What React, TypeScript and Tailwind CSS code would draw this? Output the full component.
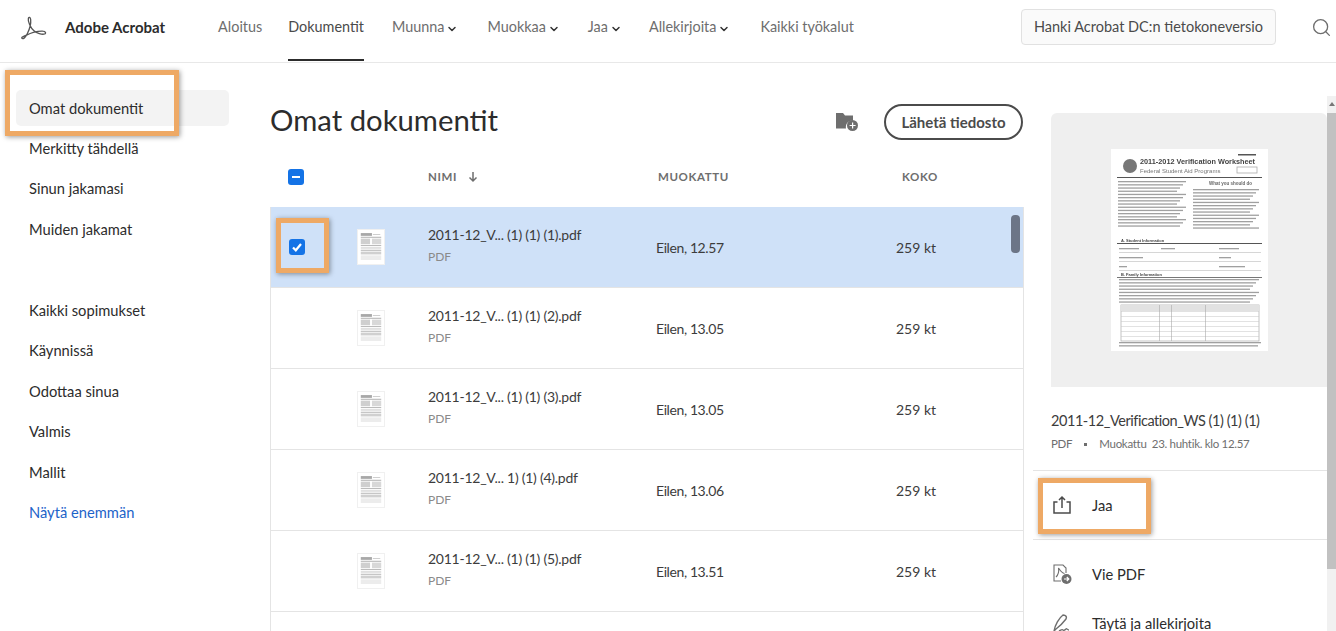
import { ChevronDown, Search } from 'lucide-react';

const font = { fontFamily: 'Lato, "Open Sans", sans-serif' };

const rows = [
  { name: '2011-12_V... (1) (1) (1).pdf', modified: 'Eilen, 12.57', selected: true },
  { name: '2011-12_V... (1) (1) (2).pdf', modified: 'Eilen, 13.05' },
  { name: '2011-12_V... (1) (1) (3).pdf', modified: 'Eilen, 13.05' },
  { name: '2011-12_V... 1) (1) (4).pdf', modified: 'Eilen, 13.06' },
  { name: '2011-12_V... (1) (1) (5).pdf', modified: 'Eilen, 13.51' }
];

const navItems = [
  { label: 'Aloitus', cls: 'ml-[53px]' },
  { label: 'Dokumentit', cls: 'ml-[26px]', active: true },
  { label: 'Muunna', cls: 'ml-[28px]', menu: true },
  { label: 'Muokkaa', cls: 'ml-[29px]', menu: true },
  { label: 'Jaa', cls: 'ml-[28px]', menu: true },
  { label: 'Allekirjoita', cls: 'ml-[27px]', menu: true },
  { label: 'Kaikki työkalut', cls: 'ml-[30px]' }
];

function AcrobatLogo() {
  return (
    <svg viewBox="0 0 30 30" className="h-[28px] w-[28px]" fill="none" stroke="#555" strokeWidth="1.4">
      <path d="M3 27c1 1.500 3.500 0 6-5 2.500-5 4-10 3.500-15-.2-2.500-2-3-2.500-1-.7 3 2.500 10 6 13 3 2.500 8.500 4.500 11.500 3.500 1.800-.7 1-3-2-3-4.500-.2-13 2-18 4.500-2.500 1.200-5 1.500-4.500 3z" />
    </svg>
  );
}

function DocThumb({ detailed }: { detailed?: boolean }) {
  if (!detailed) {
    return (
      <svg viewBox="0 0 28 36" className="h-[36px] w-[28px] border border-[#f0f0f0] bg-white">
        <g className="blur-[0.5px]">
          <rect x="3" y="3" width="12" height="3" fill="#a8a8a8" />
          <rect x="16" y="4" width="8" height="1" fill="#ccc" />
          <rect x="3" y="7" width="22" height="1" fill="#aaa" />
          <rect x="3" y="9" width="10" height="6" fill="#cfcfcf" />
          <rect x="15" y="9" width="10" height="6" fill="#d8d8d8" />
          <rect x="3" y="16" width="22" height="1" fill="#b0b0b0" />
          <rect x="3" y="18" width="22" height="2" fill="#e0e0e0" />
          <rect x="3" y="21" width="22" height="1" fill="#b0b0b0" />
          <rect x="3" y="23" width="22" height="3" fill="#d0d0d0" />
          <rect x="3" y="27" width="22" height="5" fill="#ececec" />
        </g>
      </svg>
    );
  }
  const para = (x: number, y: number, w: number, n: number) =>
    Array.from({ length: n }, (_, i) => (
      <rect key={`${x}-${y}-${i}`} x={x} y={y + i * 3.2} width={w - (i % 4) * 3} height="1.3" fill="#a0a0a0" />
    ));
  return (
    <svg viewBox="0 0 157 202" className="h-[202px] w-[157px] bg-white">
      <g className="blur-[0.4px]">
        <circle cx="19" cy="17" r="7" fill="#777" />
        <text x="29" y="15" fontSize="7.300" fontWeight="700" fill="#444" fontFamily="Liberation Sans, sans-serif">
          2011-2012 Verification Worksheet
        </text>
        <text x="29" y="24" fontSize="6" fill="#777" fontFamily="Liberation Sans, sans-serif">
          Federal Student Aid Programs
        </text>
        <rect x="127" y="5" width="18" height="1.500" fill="#555" />
        <rect x="126" y="18" width="20" height="6" fill="none" stroke="#aaa" strokeWidth="0.8" />
        <rect x="6" y="28" width="145" height="1" fill="#555" />
        {para(7, 32, 68, 12)}
        {para(7, 70, 68, 3)}
        <text x="98" y="36" fontSize="4.500" fontWeight="700" fill="#666" fontFamily="Liberation Sans, sans-serif">
          What you should do
        </text>
        {para(82, 40, 66, 13)}
        <text x="10" y="93" fontSize="4" fontWeight="700" fill="#444" fontFamily="Liberation Sans, sans-serif">
          A. Student Information
        </text>
        <rect x="6" y="94" width="145" height="1" fill="#555" />
        {[103, 112, 121].map((y) => (
          <rect key={y} x="8" y={y} width="142" height="0.600" fill="#bbb" />
        ))}
        {para(8, 99, 20, 1)}
        {para(50, 99, 14, 1)}
        {para(108, 99, 20, 1)}
        {para(8, 108, 24, 1)}
        {para(108, 108, 12, 1)}
        {para(8, 117, 8, 1)}
        {para(108, 117, 26, 1)}
        <text x="10" y="127" fontSize="4" fontWeight="700" fill="#444" fontFamily="Liberation Sans, sans-serif">
          B. Family Information
        </text>
        <rect x="6" y="128" width="145" height="0.800" fill="#555" />
        {para(8, 130, 140, 8)}
        <rect x="10" y="156" width="138" height="36" fill="none" stroke="#aaa" strokeWidth="0.7" />
        <rect x="10" y="156" width="138" height="6" fill="#e2e2e2" />
        {[162, 167, 172, 177, 182, 187].map((y) => (
          <rect key={y} x="10" y={y} width="138" height="0.500" fill="#c4c4c4" />
        ))}
        {[48, 60, 94].map((x) => (
          <rect key={x} x={x} y="156" width="0.600" height="36" fill="#aaa" />
        ))}
        {para(8, 193, 142, 2)}
      </g>
    </svg>
  );
}

function Checkbox({ kind }: { kind: 'check' | 'minus' }) {
  return (
    <span className="flex h-[16px] w-[16px] items-center justify-center rounded-[3px] bg-[#1473e6]">
      {kind === 'check' ? (
        <svg viewBox="0 0 12 12" className="h-[12px] w-[12px]" fill="none" stroke="#fff" strokeWidth="2.200">
          <path d="M2 6.500l2.800 2.800L10 3" />
        </svg>
      ) : (
        <span className="h-[2px] w-[8px] bg-white" />
      )}
    </span>
  );
}

function Highlight({ className }: { className: string }) {
  return (
    <div
      className={`pointer-events-none absolute border-[5px] border-[#eea965] shadow-[1px_1px_5px_rgba(0,0,0,0.4)] ${className}`}
    />
  );
}

function SideLink({ label, className = 'text-[#2c2c2c]' }: { label: string; className?: string }) {
  return <div className={`flex h-[36px] items-center pl-[13px] text-[14.700px] ${className}`}>{label}</div>;
}

function Action({ label, icon, className }: { label: string; icon: React.ReactNode; className: string }) {
  return (
    <div className={`flex items-center pl-[19px] text-[14.700px] text-[#2c2c2c] ${className}`}>
      <span className="flex w-[40px] items-center">{icon}</span>
      {label}
    </div>
  );
}

export default function App() {
  return (
    <div className="relative h-[631px] w-[1336px] overflow-hidden bg-white" style={font}>
      <header className="flex h-[63px] items-center border-b border-[#e8e8e8] pb-[8px] pl-[19px] text-[14.400px] text-[#6e6e6e]">
        <AcrobatLogo />
        <span className="ml-[18px] text-[15px] font-bold text-[#2c2c2c]">Adobe Acrobat</span>
        {navItems.map((item) => (
          <div
            key={item.label}
            className={`relative flex h-[54px] items-center ${item.cls} ${item.active ? 'text-[#4b4b4b]' : ''}`}
          >
            {item.label}
            {item.menu && <ChevronDown size={12} strokeWidth={3} className="ml-[2px] mt-[3px] text-[#333]" />}
            {item.active && <span className="absolute inset-x-0 bottom-[-7px] h-[2px] bg-[#2c2c2c]" />}
          </div>
        ))}
        <div className="ml-[auto] flex h-[36px] w-[255px] items-center justify-center rounded-[4px] border border-[#e1e1e1] bg-[#fafafa] text-[14.500px] text-[#4b4b4b]">
          Hanki Acrobat DC:n tietokoneversio
        </div>
        <Search size={21} strokeWidth={1.500} className="ml-[35px] mr-[4px] text-[#6e6e6e]" />
      </header>

      <div className="flex">
        <aside className="w-[270px] shrink-0 pl-[16px] pt-[27px]">
          <SideLink label="Omat dokumentit" className="w-[213px] rounded-[5px] bg-[#f3f3f3] text-[#2c2c2c]" />
          <div className="mt-[4px] flex flex-col gap-[4.500px]">
            <SideLink label="Merkitty tähdellä" />
            <SideLink label="Sinun jakamasi" />
            <SideLink label="Muiden jakamat" />
          </div>
          <div className="mt-[45px] flex flex-col gap-[4.500px]">
            <SideLink label="Kaikki sopimukset" />
            <SideLink label="Käynnissä" />
            <SideLink label="Odottaa sinua" />
            <SideLink label="Valmis" />
            <SideLink label="Mallit" />
            <SideLink label="Näytä enemmän" className="text-[#1d63c9]" />
          </div>
        </aside>

        <main className="w-[754px] shrink-0">
          <div className="flex h-[99px] items-start pt-[41px]">
            <h1 className="-mt-[2px] text-[29.300px] leading-[36px] text-[#2c2c2c]">Omat dokumentit</h1>
            <svg viewBox="0 0 24 22" className="ml-[auto] mt-[6px] h-[22px] w-[24px]" fill="#6e6e6e">
              <path d="M1 3h7l2 2.500h8v5a6.500 6.500 0 0 0-7 8H1z" />
              <circle cx="17.500" cy="15.500" r="5.500" />
              <path d="M17 12.500h1.200v2.400h2.400v1.200h-2.400v2.400H17v-2.400h-2.400v-1.200H17z" fill="#fff" />
            </svg>
            <div className="ml-[25px] mr-[1px] flex h-[36px] w-[139px] items-center justify-center rounded-full border-2 border-[#4b4b4b] text-[15px] font-bold text-[#4b4b4b]">
              Lähetä tiedosto
            </div>
          </div>

          <div className="flex h-[30px] items-center text-[11.500px] font-bold tracking-[0.6px] text-[#6e6e6e]">
            <span className="ml-[18px]">
              <Checkbox kind="minus" />
            </span>
            <span className="ml-[124px] flex w-[230px] items-center">
              NIMI
              <svg viewBox="0 0 12 12" className="ml-[10px] h-[12px] w-[12px]" fill="none" stroke="#6e6e6e" strokeWidth="1.500">
                <path d="M6 1v9M2.500 6.500L6 10l3.500-3.500" />
              </svg>
            </span>
            <span className="w-[244px]">MUOKATTU</span>
            <span>KOKO</span>
          </div>

          <div className="relative mt-[15px] h-[424px] w-[754px] overflow-hidden border-x border-[#e4e4e4]">
            {rows.map((row) => (
              <div
                key={row.name}
                className={`flex h-[81px] items-center border-b border-[#e4e4e4] ${row.selected ? 'bg-[#cfe1f8]' : 'bg-white'}`}
              >
                <span className="ml-[18px] w-[68px]">{row.selected && <Checkbox kind="check" />}</span>
                <DocThumb />
                <div className="ml-[43px] w-[228px] pb-[4px]">
                  <div className="text-[14px] leading-[20px] tracking-[-0.25px] text-[#3c3c3c]">{row.name}</div>
                  <div className="mt-[4px] text-[12px] leading-[16px] text-[#8a8a8a]">PDF</div>
                </div>
                <span className="w-[240px] text-[14px] tracking-[-0.4px] text-[#3c3c3c]">{row.modified}</span>
                <span className="text-[14px] text-[#3c3c3c]">259 kt</span>
              </div>
            ))}
            <div className="absolute right-[3px] top-[8px] h-[38px] w-[9px] rounded-[4px] bg-[#6c7587]" />
          </div>
        </main>

        <section className="ml-[9px] w-[294px] shrink-0 pt-[50px]">
          <div className="ml-[18px] flex h-[274px] w-[276px] items-center justify-center rounded-t-[6px] bg-[#efefef]">
            <DocThumb detailed />
          </div>
          <div className="ml-[18px] mt-[24px] text-[14.500px] leading-[20px] tracking-[-0.45px] text-[#3c3c3c]">
            2011-12_Verification_WS (1) (1) (1)
          </div>
          <div className="ml-[18px] mt-[2px] flex items-center text-[11.500px] leading-[22px] tracking-[-0.3px] text-[#6e6e6e]">
            PDF
            <span className="ml-[12px] mr-[12px] h-[3px] w-[3px] bg-[#6e6e6e]" />
            Muokattu&nbsp;&nbsp;23. huhtik. klo 12.57
          </div>
          <div className="mt-[15px] h-px bg-[#e4e4e4]" />
          <Action
            label="Jaa"
            className="h-[68px]"
            icon={
              <svg viewBox="0 0 20 20" className="h-[20px] w-[20px]" fill="none" stroke="#4b4b4b" strokeWidth="1.500">
                <path d="M5.500 7H2v11h16V7h-3.500M10 13V2M7 5l3-3 3 3" />
              </svg>
            }
          />
          <div className="h-px bg-[#e4e4e4]" />
          <Action
            label="Vie PDF"
            className="mt-[16px] h-[36px]"
            icon={
              <svg viewBox="0 0 20 22" className="h-[22px] w-[20px]" fill="none" stroke="#6e6e6e" strokeWidth="1.100">
                <path d="M9 18H2V2h9l3 3v5M4 14c2-2 3-6 2.500-9 2 3 3.500 5 6 5.500" />
                <circle cx="14.500" cy="16" r="5" fill="#6e6e6e" stroke="none" />
                <path d="M12 16h4.500M14.800 14l2 2-2 2" stroke="#fff" strokeWidth="1.200" />
              </svg>
            }
          />
          <Action
            label="Täytä ja allekirjoita"
            className="mt-[13px] h-[36px]"
            icon={
              <svg viewBox="0 0 20 20" className="h-[20px] w-[20px]" fill="none" stroke="#6e6e6e" strokeWidth="1.400">
                <path d="M2 18c1-6 5-13 9-16 3 0 4 2 3 4-3 4-6 7-10 10zM7 18c2-1 3-2 4-1s2 0 3-1 1 1 3 1" />
              </svg>
            }
          />
        </section>

        <div className="mt-[33px] flex h-[535px] w-[9px] shrink-0 flex-col bg-[#f1f1f1]">
          <div className="flex h-[16px] items-center justify-center text-[#777]">
            <span className="border-x-[3px] border-b-[4px] border-x-transparent border-b-[#777]" />
          </div>
          <div className="mt-[1px] h-[456px] bg-[#c1c1c1]" />
        </div>
      </div>

      <Highlight className="left-[5px] top-[70px] h-[66px] w-[174px]" />
      <Highlight className="left-[276px] top-[218px] h-[55px] w-[53px]" />
      <Highlight className="left-[1038px] top-[478px] h-[56px] w-[113px]" />
    </div>
  );
}
